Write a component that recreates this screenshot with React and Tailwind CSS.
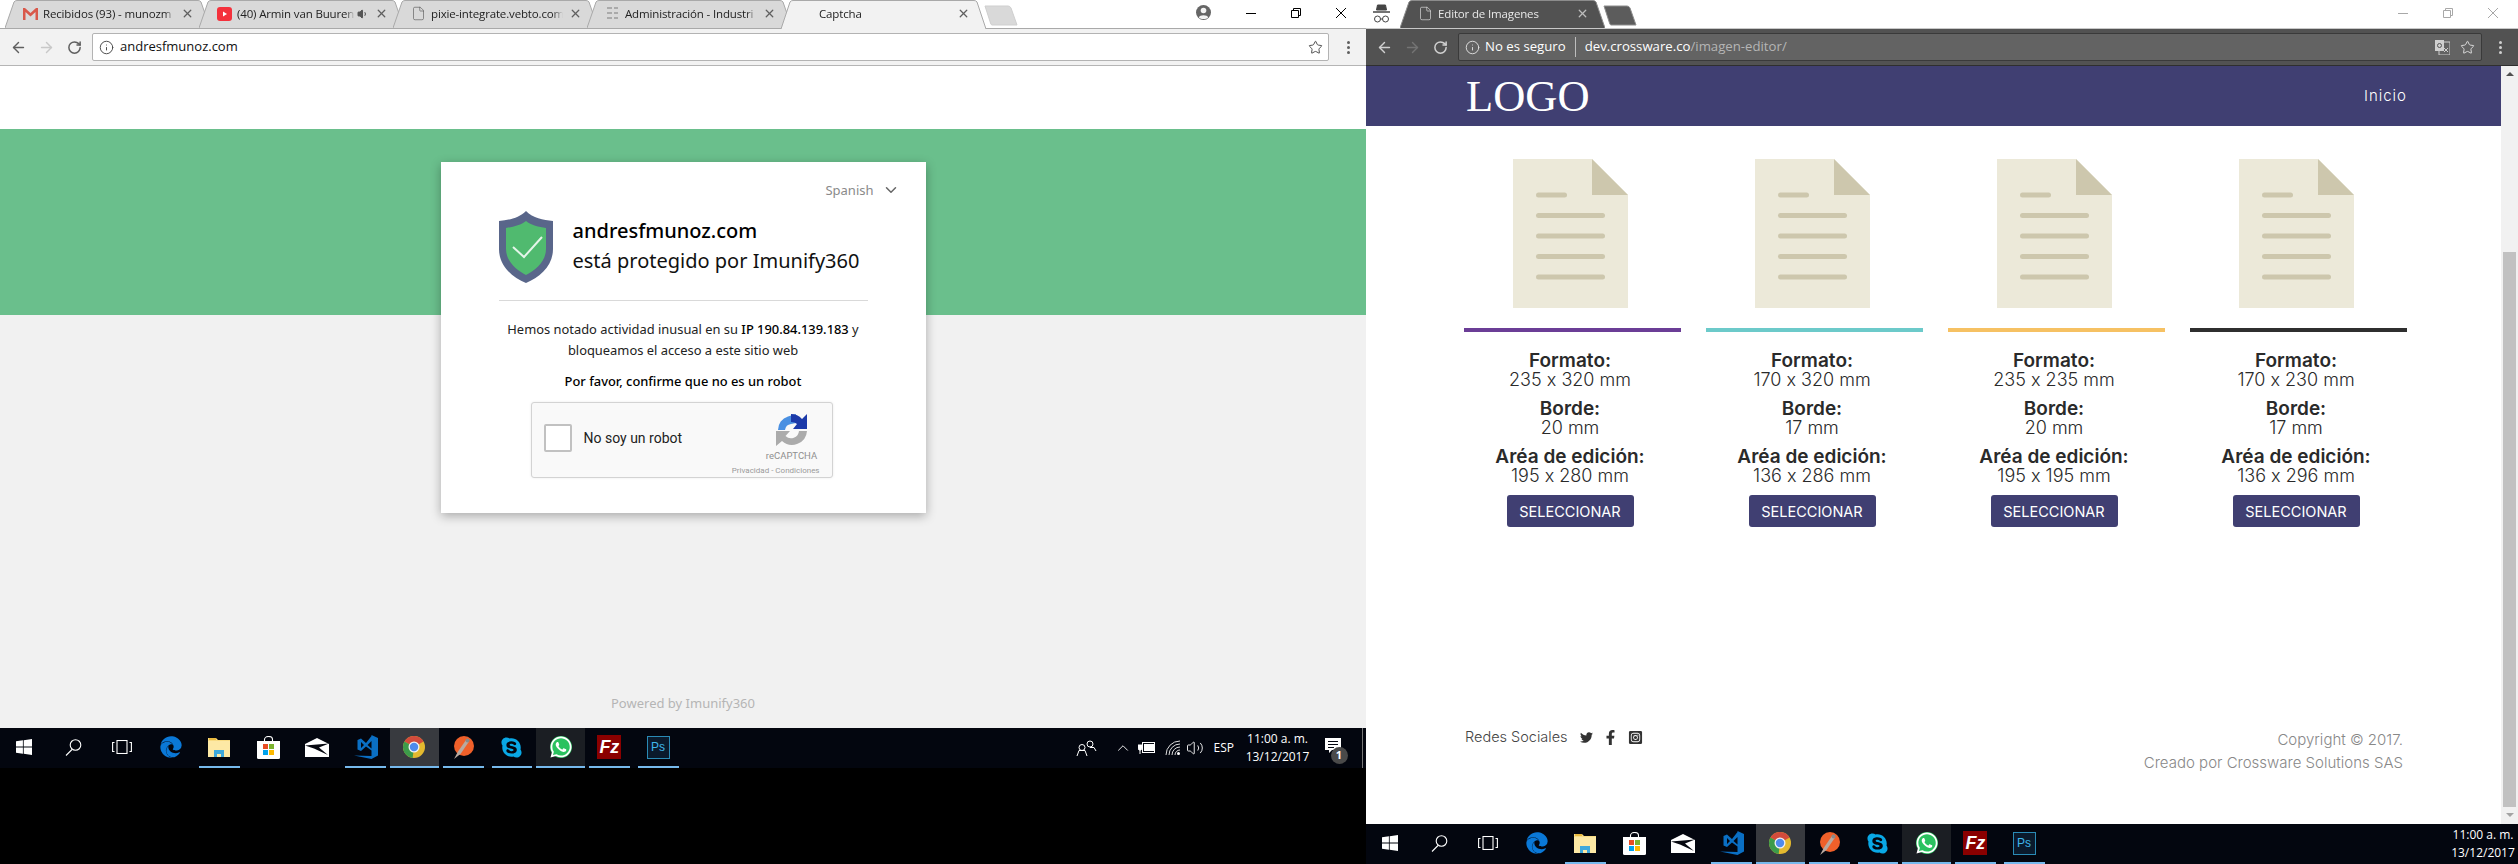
import { ArrowLeft, ArrowRight, RotateCw, Info, Star, ChevronDown, ChevronUp, File, X, Volume1, Volume2 } from 'lucide-react';
import { FaEdge, FaSkype, FaWhatsapp, FaTwitter, FaFacebookF, FaInstagramSquare } from 'react-icons/fa';

const uiFont = 'font-["Open_Sans","Noto_Sans",sans-serif]';
const cardFont = 'font-["Noto_Sans",sans-serif]';
const siteFont = 'font-["Inter",sans-serif] [font-variant-ligatures:no-contextual]';

const formats = [
  { color: 'bg-[#6b3d96]', size: '235 x 320 mm', border: '20 mm', area: '195 x 280 mm' },
  { color: 'bg-[#6ccaca]', size: '170 x 320 mm', border: '17 mm', area: '136 x 286 mm' },
  { color: 'bg-[#f6c163]', size: '235 x 235 mm', border: '20 mm', area: '195 x 195 mm' },
  { color: 'bg-[#2f2f2f]', size: '170 x 230 mm', border: '17 mm', area: '136 x 296 mm' },
];

const WindowsLogo = () => (
  <svg width="16" height="16" viewBox="0 0 16 16" fill="#fff">
    <path d="M0 2.3 6.900 1.300V7.600H0ZM7.700 1.200 16 0V7.600H7.700ZM0 8.400H6.900V14.700L0 13.700ZM7.700 8.400H16V16L7.700 14.800Z" />
  </svg>
);

const SearchGlass = () => (
  <svg width="17" height="17" viewBox="0 0 17 17" fill="none" stroke="#fff" strokeWidth="1.100">
    <circle cx="10.500" cy="6" r="5.300" />
    <path d="M7 10.500 1 16.500" />
  </svg>
);

const TaskView = () => (
  <svg width="20" height="14" viewBox="0 0 20 14" fill="none" stroke="#fff" strokeWidth="1.100">
    <rect x="5" y=".5" width="10" height="13" />
    <path d="M2.500 2.500H.6V11.500H2.500M17.500 2.500H19.400V11.500H17.500" />
  </svg>
);

const FolderIcon = () => (
  <svg width="22" height="19" viewBox="0 0 22 19">
    <path d="M0 0H8L10 2H22V19H0Z" fill="#f9dc83" />
    <path d="M0 3H22V19H0Z" fill="#fde9a5" />
    <path d="M6 12H16V19H13V16H9V19H6Z" fill="#3fa9dc" />
    <path d="M1 0H8V2H1Z" fill="#e9b93f" />
  </svg>
);

const StoreIcon = () => (
  <svg width="23" height="23" viewBox="0 0 23 23">
    <path d="M7.500 6V3.500a4 3 0 0 1 8 0V6" fill="none" stroke="#fff" strokeWidth="1.100" />
    <path d="M0 5H23V21.500a1.500 1.500 0 0 1-1.500 1.500H1.500A1.500 1.500 0 0 1 0 21.500Z" fill="#fff" />
    <rect x="6" y="8" width="5" height="5" fill="#e84c23" />
    <rect x="12" y="8" width="5" height="5" fill="#7bb32e" />
    <rect x="6" y="14" width="5" height="5" fill="#00a3ee" />
    <rect x="12" y="14" width="5" height="5" fill="#fdb900" />
  </svg>
);

const MailIcon = () => (
  <svg width="24" height="19" viewBox="0 0 24 19">
    <path d="M0 6 12 0 24 6V19H0Z" fill="#fff" />
    <path d="M0 7.500 24 5.500 14 9.500 23 17 9 10.500Z" fill="#05070f" />
  </svg>
);

const VsCodeIcon = () => (
  <svg width="24" height="24" viewBox="0 0 24 24">
    <path
      fillRule="evenodd"
      d="M17.500 0 24 3V20.500L17.500 24 0 20.500 17.500 21V15.500L12 11.500 7 16 3.500 14.500V5L7 3.500 12 8 17.500 1ZM7 7V13L10 10ZM17.500 6 13.500 10 17.500 13.500Z"
      fill="#0a6fc4"
    />
  </svg>
);

const ChromeLogo = () => (
  <svg width="22" height="22" viewBox="0 0 24 24">
    <circle cx="12" cy="12" r="12" fill="#e3b92f" />
    <path d="M12 12 1.600 6A12 12 0 0 1 22.400 6Z" fill="#d24b3c" />
    <path d="M12 12 1.600 6A12 12 0 0 0 10.500 23.900Z" fill="#3c9b4a" />
    <circle cx="12" cy="12" r="6" fill="#f2f2f2" />
    <circle cx="12" cy="12" r="4.600" fill="#4f8bec" />
  </svg>
);

const BrushIcon = () => (
  <svg width="21" height="23" viewBox="0 0 21 23">
    <ellipse cx="11" cy="10" rx="10" ry="10" fill="#f0602a" />
    <path d="M1 23 5 15.500 13 4 16 5.500 7.500 18Z" fill="#b9a9a0" />
    <circle cx="14.500" cy="4.500" r="2" fill="#8a8a8a" />
  </svg>
);

const WhatsappIcon = () => (
  <div className="flex h-[22px] w-[22px] items-center justify-center rounded-full bg-[#2ac25f]">
    <FaWhatsapp size={24} color="#fff" />
  </div>
);

const FileZillaIcon = () => (
  <div className="flex h-[24px] w-[24px] items-center justify-center bg-[#8a0000]">
    <span className='font-["Liberation_Sans",sans-serif] text-[18px] font-bold italic leading-none text-white'>Fz</span>
  </div>
);

const PhotoshopIcon = () => (
  <div className="flex h-[23px] w-[23px] items-center justify-center border border-[#2a8ab5] bg-[#0a1a2c]">
    <span className='font-["Liberation_Sans",sans-serif] text-[12px] leading-none text-[#3fb5ea]'>Ps</span>
  </div>
);

const taskItems = [
  { icon: <WindowsLogo /> },
  { icon: <SearchGlass /> },
  { icon: <TaskView /> },
  { icon: <FaEdge size={22} color="#0a78d7" /> },
  { icon: <FolderIcon />, open: true },
  { icon: <StoreIcon /> },
  { icon: <MailIcon /> },
  { icon: <VsCodeIcon />, open: true },
  { icon: <ChromeLogo />, open: true, active: true },
  { icon: <BrushIcon />, open: true },
  { icon: <FaSkype size={23} color="#09a8e6" />, open: true },
  { icon: <WhatsappIcon />, open: true, soft: true },
  { icon: <FileZillaIcon />, open: true },
  { icon: <PhotoshopIcon />, open: true },
];

const TaskIcons = () => (
  <div className="flex h-full shrink-0">
    {taskItems.map((item, i) => (
      <div
        key={i}
        className={`flex h-full w-[48.75px] flex-col ${item.active ? 'bg-[#383a3f]' : item.soft ? 'bg-[#1b1e23]' : ''}`}
      >
        <div className="flex flex-1 items-center justify-center">{item.icon}</div>
        <div className={`h-[2px] ${item.open ? 'bg-[#76b9ed]' : ''} ${item.active || item.soft ? '' : 'mx-[4px]'}`} />
      </div>
    ))}
  </div>
);

const Clock = () => (
  <div className={`${uiFont} whitespace-nowrap text-center text-[12px] leading-[18px] text-white`}>
    <div>11:00 a. m.</div>
    <div>13/12/2017</div>
  </div>
);

const Tab = ({ title, icon, extra, active, dark, width = 205 }) => {
  const fill = dark ? '#525252' : active ? '#f2f2f2' : '#d9d9d9';
  const stroke = dark ? '#8c8c8c' : '#a9a9a9';
  const text = dark ? 'text-[#e8e8e8]' : 'text-[#222]';
  return (
    <div className={`relative -ml-[11px] flex h-[29px] shrink-0 items-center pb-[2px] first:ml-0 ${active ? 'z-10' : ''}`} style={{ width }}>
      <svg className="absolute inset-0" width={width} height="29">
        <path
          d={`M0 ${active ? 29 : 28} L9 2 Q10 .5 12 .5 H${width - 12} Q${width - 10} .5 ${width - 9} 2 L${width} ${active ? 29 : 28}`}
          fill={fill}
          stroke={stroke}
        />
      </svg>
      <div className="relative flex w-full items-center pl-[17px] pr-[16px]">
        <div className="flex w-[16px] shrink-0 justify-center">{icon}</div>
        <div className={`${uiFont} ml-[5px] min-w-0 flex-1 overflow-hidden whitespace-nowrap text-[11.500px] tracking-[-0.15px] ${text} [mask-image:linear-gradient(to_right,black_92%,transparent)]`}>
          {title}
        </div>
        {extra}
        <X size={13} strokeWidth={2.4} className={`ml-[6px] shrink-0 ${dark ? 'text-[#bdbdbd]' : 'text-[#5f5f5f]'}`} />
      </div>
    </div>
  );
};

const GmailIcon = () => (
  <svg width="15" height="13" viewBox="0 0 15 13">
    <path d="M0 1H2L7.500 6 13 1H15V13H12.500V5L7.500 9.500 2.500 5V13H0Z" fill="#d9584a" />
  </svg>
);

const YoutubeIcon = () => (
  <svg width="15" height="14" viewBox="0 0 15 14">
    <rect width="15" height="14" rx="3" fill="#f4313c" />
    <path d="M6 4.500 10 7 6 9.500Z" fill="#fff" />
  </svg>
);

const GripIcon = () => (
  <svg width="11" height="13" viewBox="0 0 11 13" fill="#aaa">
    <path d="M0 0H5V2H0ZM7 0H11V2H7ZM0 5H5V7H0ZM7 5H11V7H7ZM0 10H5V12H0ZM7 10H11V12H7Z" />
  </svg>
);

const Incognito = ({ color = '#444' }) => (
  <svg width="17" height="20" viewBox="0 0 17 20" fill="none" stroke={color}>
    <path d="M4.500 1H12.500L13.500 6H3.500Z" fill={color} />
    <path d="M0 8H17" strokeWidth="1.500" />
    <circle cx="4.500" cy="15" r="3" />
    <circle cx="12.500" cy="15" r="3" />
    <path d="M7.500 15H9.500" />
  </svg>
);

const NewTab = ({ dark }) => (
  <svg className="-ml-[2px] mt-[5px] shrink-0" width="34" height="21" viewBox="0 0 34 21">
    <path d="M1 1H24Q26 1 27 3L33 20H8Q7 20 6.500 18Z" fill={dark ? '#5c5c5c' : '#d9d9d9'} stroke={dark ? '#8c8c8c' : '#cfcfcf'} />
  </svg>
);

const WindowControls = ({ light }) => (
  <div className={`ml-auto flex h-[28px] shrink-0 items-start pr-[2px] pt-[8px] ${light ? 'text-[#a8a8a8]' : 'text-black'}`}>
    <div className="flex w-[45px] justify-center">
      <svg width="10" height="10" viewBox="0 0 10 10" stroke="currentColor"><path d="M0 5.500H10" /></svg>
    </div>
    <div className="flex w-[45px] justify-center">
      <svg width="10" height="10" viewBox="0 0 10 10" fill="none" stroke="currentColor"><path d="M.5 2.500H7.500V9.500H.5ZM2.500 2.500V.5H9.500V7.500H7.500" /></svg>
    </div>
    <div className="flex w-[46px] justify-center">
      <svg width="10" height="10" viewBox="0 0 10 10" stroke="currentColor"><path d="M0 0 10 10M10 0 0 10" /></svg>
    </div>
  </div>
);

const Dots = ({ color }) => (
  <div className="flex flex-col gap-[2px]">
    <span className={`h-[3px] w-[3px] rounded-full ${color}`} />
    <span className={`h-[3px] w-[3px] rounded-full ${color}`} />
    <span className={`h-[3px] w-[3px] rounded-full ${color}`} />
  </div>
);

const AvatarIcon = () => (
  <svg className="ml-[178px] mt-[5px]" width="15" height="15" viewBox="0 0 15 15">
    <circle cx="7.500" cy="7.500" r="7.500" fill="#666" />
    <circle cx="7.500" cy="5.500" r="2.800" fill="#f4f4f4" />
    <path d="M2.800 12.500C3.500 9.500 11.500 9.500 12.200 12.500 10 14.500 5 14.500 2.800 12.500Z" fill="#f4f4f4" />
  </svg>
);

const ShieldLogo = () => (
  <svg width="54" height="72" viewBox="0 0 54 72" className="shrink-0">
    <path d="M27 0C34 7 44 9 54 10V38C54 55 41 66 27 72 13 66 0 55 0 38V10C10 9 20 7 27 0Z" fill="#59668a" />
    <path d="M27 10C32 14 40 16 47 17V38C47 50 37 59 27 64 17 59 7 50 7 38V17C14 16 22 14 27 10Z" fill="#50ba6f" />
    <path d="M14 36 25 46 43 26" fill="none" stroke="#e4f5e9" strokeWidth="2" />
  </svg>
);

const RecaptchaLogo = () => (
  <svg width="32" height="32" viewBox="0 0 32 32" fill="none">
    <path d="M2 16A14 14 0 0 1 12 2.500L20 0V9L15 10A7 7 0 0 0 9 16Z" fill="#4a90e2" />
    <path d="M15 0A15 15 0 0 1 26 5L31 0V15H17L21 10A8 8 0 0 0 15 8Z" fill="#1c3aa9" />
    <path d="M0 17H14L9.500 22A8 8 0 0 0 23 17H31A15 15 0 0 1 6 27L0 32Z" fill="#ababab" />
  </svg>
);

const CaptchaCard = () => (
  <div className="z-10 mx-auto -mt-[153px] h-[351px] w-[485px] bg-white pl-[58px] pt-[19px] shadow-[0_3px_10px_rgba(0,0,0,0.3)]">
    <div className={`${cardFont} flex items-center justify-end pr-[26px] text-[13px] leading-[16px] text-[#8a8a8a]`}>
      Spanish
      <ChevronDown size={18} strokeWidth={2} className="ml-[8px] text-[#666]" />
    </div>
    <div className="mt-[12px] flex w-[369px] items-center border-b border-[#d9d9d9] pb-[17px]">
      <ShieldLogo />
      <div className={`${cardFont} ml-[20px] -mt-[3px] text-[20px] leading-[30px] text-[#111]`}>
        <div className="font-medium text-black">andresfmunoz.com</div>
        <div>está protegido por Imunify360</div>
      </div>
    </div>
    <div className={`${cardFont} mt-[18px] w-[369px] text-center text-[12.900px] leading-[21px] text-[#222]`}>
      <p className="whitespace-nowrap">
        Hemos notado actividad inusual en su <b className="font-medium text-black">IP 190.84.139.183</b> y
      </p>
      <p>bloqueamos el acceso a este sitio web</p>
      <p className="mt-[10px] font-medium text-black">Por favor, confirme que no es un robot</p>
    </div>
    <div className='ml-[32px] mt-[10px] flex h-[76px] w-[302px] items-start rounded-[3px] border border-[#d3d3d3] bg-[#f9f9f9] pl-[12px] pt-[21px] font-["Roboto",sans-serif] shadow-[0_0_3px_rgba(0,0,0,0.08)]'>
      <div className="h-[28px] w-[28px] rounded-[2px] border-2 border-[#c1c1c1] bg-white" />
      <div className="ml-[12px] mt-[5px] text-[14px] leading-[18px] text-[#222]">No soy un robot</div>
      <div className="ml-auto -mt-[10px] flex w-[100px] flex-col items-end pr-[12px]">
        <div className="flex w-[56px] justify-center"><RecaptchaLogo /></div>
        <div className="mt-[3px] w-[56px] whitespace-nowrap text-center text-[9.500px] leading-[14px] text-[#8f8f8f]">reCAPTCHA</div>
        <div className="mt-[2px] whitespace-nowrap text-[8px] leading-[12px] text-[#9a9a9a]">Privacidad - Condiciones</div>
      </div>
    </div>
  </div>
);

const LeftWindow = () => (
  <div className="flex h-full w-[1366px] shrink-0 flex-col bg-black">
    <div className="flex h-[29px] items-start border-b border-[#a9a9a9] bg-white pl-[5px]">
      <Tab title="Recibidos (93) - munozm" icon={<GmailIcon />} />
      <Tab
        title="(40) Armin van Buuren"
        icon={<YoutubeIcon />}
        extra={<Volume1 size={12} className="ml-[2px] shrink-0 fill-[#555] text-[#555]" />}
      />
      <Tab title="pixie-integrate.vebto.com" icon={<File size={15} strokeWidth={1} className="text-[#555]" />} />
      <Tab title="Administración - Industri" icon={<GripIcon />} />
      <Tab title="Captcha" active />
      <NewTab />
      <div className="flex h-[28px] flex-1 items-start">
        <AvatarIcon />
        <WindowControls />
      </div>
    </div>
    <div className="flex h-[37px] items-center border-b border-[#b5b5b5] bg-[#f2f2f2]">
      <div className="flex w-[92px] items-center pl-[10px] text-[#5f5f5f]">
        <ArrowLeft size={17} strokeWidth={2} />
        <ArrowRight size={17} strokeWidth={2} className="ml-[11px] text-[#c8c8c8]" />
        <RotateCw size={15} strokeWidth={2.400} className="ml-[12px]" />
      </div>
      <div className="flex h-[28px] w-[1237px] items-center rounded-[2px] border border-[#b3b3b3] bg-white pl-[6px] pr-[5px]">
        <Info size={15} strokeWidth={1.500} className="text-[#444]" />
        <span className={`${uiFont} ml-[6px] text-[13px] text-[#111]`}>andresfmunoz.com</span>
        <Star size={15} strokeWidth={1.500} className="ml-auto text-[#444]" />
      </div>
      <div className="ml-[18px]"><Dots color="bg-[#5f5f5f]" /></div>
    </div>
    <div className="h-[63px] bg-white" />
    <div className="h-[186px] bg-[#6abf8c]" />
    <div className="flex h-[413px] flex-col bg-[#f1f1f1]">
      <CaptchaCard />
      <div className={`${cardFont} mt-auto pb-[15px] text-center text-[13px] text-[#b5b5b5]`}>Powered by Imunify360</div>
    </div>
    <div className="flex h-[40px] items-center bg-[#03060f]">
      <TaskIcons />
      <svg className="ml-[393px] shrink-0" width="22" height="18" viewBox="0 0 22 18" fill="none" stroke="#fff">
        <circle cx="14" cy="5" r="3" />
        <circle cx="6" cy="8.500" r="3" />
        <path d="M1 17 3 11.500H9L11 17M14 8.500H18L20 12" />
      </svg>
      <ChevronUp size={18} strokeWidth={1.200} className="ml-[16px] shrink-0 text-white" />
      <svg className="ml-[6px] shrink-0" width="17" height="12" viewBox="0 0 17 12">
        <rect x="4.500" y=".5" width="12" height="10" fill="none" stroke="#fff" />
        <rect x="6" y="2" width="10" height="7" fill="#fff" />
        <path d="M0 3H4V6L3 8H1L0 6ZM2 8V12" fill="#fff" stroke="#fff" />
      </svg>
      <svg className="ml-[10px] shrink-0" width="16" height="16" viewBox="0 0 16 16" fill="none" stroke="#ddd">
        <path d="M1 15A14 14 0 0 1 15 1M4 15A11 11 0 0 1 15 4M7 15A8 8 0 0 1 15 7M10 15A5 5 0 0 1 15 10" />
        <circle cx="13.500" cy="13.500" r="1.500" fill="#fff" stroke="none" />
      </svg>
      <Volume2 size={18} strokeWidth={1.200} className="ml-[5px] shrink-0 text-white" />
      <span className={`${uiFont} ml-[10px] w-[20px] shrink-0 whitespace-nowrap text-center text-[12px] text-white`}>ESP</span>
      <div className="ml-[8px] w-[72px] shrink-0"><Clock /></div>
      <div className="relative ml-[11px] h-[20px] w-[20px] shrink-0">
        <svg width="16" height="15" viewBox="0 0 16 15">
          <path d="M0 0H16V12H7L4 15V12H0Z" fill="#fff" />
          <path d="M3 3.500H13M3 6.500H13M3 9.500H9" stroke="#03060f" />
        </svg>
        <span className={`${uiFont} absolute left-[6px] top-[9px] flex h-[17px] w-[17px] items-center justify-center rounded-full bg-[#4a4a4a] text-[11px] font-bold text-white`}>1</span>
      </div>
      <div className="ml-auto mr-[3px] h-full w-px bg-[#777]" />
    </div>
  </div>
);

const DocIcon = () => (
  <svg width="115" height="149" viewBox="0 0 115 149">
    <path d="M0 0H79L115 36V149H0Z" fill="#ece9d9" />
    <path d="M79 0 115 36H79Z" fill="#cdc7ad" />
    <g fill="#cdc7ad">
      <rect x="23" y="33.500" width="31" height="5" rx="2.500" />
      <rect x="23" y="54" width="69" height="5" rx="2.500" />
      <rect x="23" y="74.500" width="69" height="5" rx="2.500" />
      <rect x="23" y="95" width="69" height="5" rx="2.500" />
      <rect x="23" y="115.500" width="69" height="5" rx="2.500" />
    </g>
  </svg>
);

const FormatCard = ({ item }) => (
  <div className="w-[217px] shrink-0">
    <div className="flex w-[212px] justify-center">
      <DocIcon />
    </div>
    <div className={`mt-[20px] h-[4px] ${item.color}`} />
    <div className="mt-[19px] w-[212px] text-center text-[18px] leading-[19px] text-[#2a2a2a]">
      <div className="text-[19px] font-semibold">Formato:</div>
      <div className="font-light">{item.size}</div>
      <div className="mt-[10px] text-[19px] font-semibold">Borde:</div>
      <div className="font-light">{item.border}</div>
      <div className="mt-[10px] text-[19px] font-semibold">Aréa de edición:</div>
      <div className="font-light">{item.area}</div>
      <button className="mt-[10px] h-[32px] w-[127px] rounded-[3px] bg-[#403f72] text-[14.500px] font-normal text-white">SELECCIONAR</button>
    </div>
  </div>
);

const Scrollbar = () => (
  <div className="flex w-[17px] shrink-0 flex-col items-center bg-[#f1f1f1]">
    <div className="mt-[6px] h-0 w-0 border-x-[4px] border-b-[4px] border-x-transparent border-b-[#505050]" />
    <div className="mt-[176px] h-[555px] w-[13px] shrink-0 bg-[#c1c1c1]" />
    <div className="mt-[6px] h-0 w-0 border-x-[4px] border-t-[4px] border-x-transparent border-t-[#a3a3a3]" />
  </div>
);

const RightWindow = () => (
  <div className="flex h-full flex-1 flex-col bg-white">
    <div className="flex h-[29px] items-start border-b border-[#c8c8c8] bg-white">
      <div className="w-[45px] shrink-0 pl-[7px] pt-[4px]"><Incognito /></div>
      <Tab title="Editor de Imagenes" dark icon={<File size={15} strokeWidth={1} className="text-[#e8e8e8]" />} />
      <NewTab dark />
      <WindowControls light />
    </div>
    <div className="flex h-[37px] items-center border-b border-[#2f2f2f] bg-[#525252]">
      <div className="flex w-[92px] items-center pl-[10px] text-[#d0d0d0]">
        <ArrowLeft size={17} strokeWidth={2} />
        <ArrowRight size={17} strokeWidth={2} className="ml-[11px] text-[#747474]" />
        <RotateCw size={15} strokeWidth={2.400} className="ml-[12px]" />
      </div>
      <div className={`${uiFont} flex h-[28px] w-[1024px] items-center rounded-[2px] border border-[#3a3a3a] bg-[#636363] pl-[6px] pr-[6px] text-[13.200px]`}>
        <Info size={15} strokeWidth={1.500} className="text-[#e0e0e0]" />
        <span className="ml-[5px] text-white">No es seguro</span>
        <span className="mx-[9px] h-[20px] w-px bg-[#bdbdbd]" />
        <span className="text-white">dev.crossware.co</span>
        <span className="text-[#b5b5b5]">/imagen-editor/</span>
        <svg className="ml-auto" width="15" height="15" viewBox="0 0 15 15">
          <rect x="4" y="2" width="11" height="13" fill="none" stroke="#cfcfcf" />
          <rect width="9" height="11" fill="#cfcfcf" />
          <circle cx="4.500" cy="5.500" r="2" fill="none" stroke="#555" />
          <path d="M9 8 13 12M13 8 9 12" stroke="#cfcfcf" />
        </svg>
        <Star size={15} strokeWidth={1.500} className="ml-[10px] text-[#e0e0e0]" />
      </div>
      <div className="ml-[17px]"><Dots color="bg-[#d0d0d0]" /></div>
    </div>
    <div className="flex h-[758px]">
      <div className="flex min-w-0 flex-1 flex-col">
        <div className="flex h-[60px] items-center justify-between bg-[#403f72] pl-[100px] pr-[94px]">
          <span className='font-["Liberation_Serif",serif] text-[44.500px] leading-none text-white'>LOGO</span>
          <span className={`${siteFont} text-[15px] font-light tracking-[1px] text-white`}>Inicio</span>
        </div>
        <div className={`${siteFont} mt-[33px] flex gap-[25px] pl-[98px]`}>
          {formats.map((item, i) => <FormatCard key={i} item={item} />)}
        </div>
        <div className={`${siteFont} mt-[200px] flex justify-between pl-[99px] pr-[98px]`}>
          <div className="flex items-center self-start text-[14.500px] font-light leading-[20px] text-[#444]">
            Redes Sociales
            <FaTwitter size={13} className="ml-[12px] text-[#333]" />
            <FaFacebookF size={15} className="ml-[10px] text-[#333]" />
            <FaInstagramSquare size={15} className="ml-[10px] text-[#333]" />
          </div>
          <div className="pt-[1px] text-right text-[15px] font-light leading-[23px] text-[#888]">
            <div>Copyright © 2017.</div>
            <div>Creado por Crossware Solutions SAS</div>
          </div>
        </div>
      </div>
      <Scrollbar />
    </div>
    <div className="flex h-[40px] items-center bg-[#03060f]">
      <TaskIcons />
      <div className="ml-auto w-[70px]"><Clock /></div>
    </div>
  </div>
);

const App = () => (
  <div className="flex h-[864px] w-[2518px] overflow-hidden">
    <LeftWindow />
    <RightWindow />
  </div>
);

export default App;
